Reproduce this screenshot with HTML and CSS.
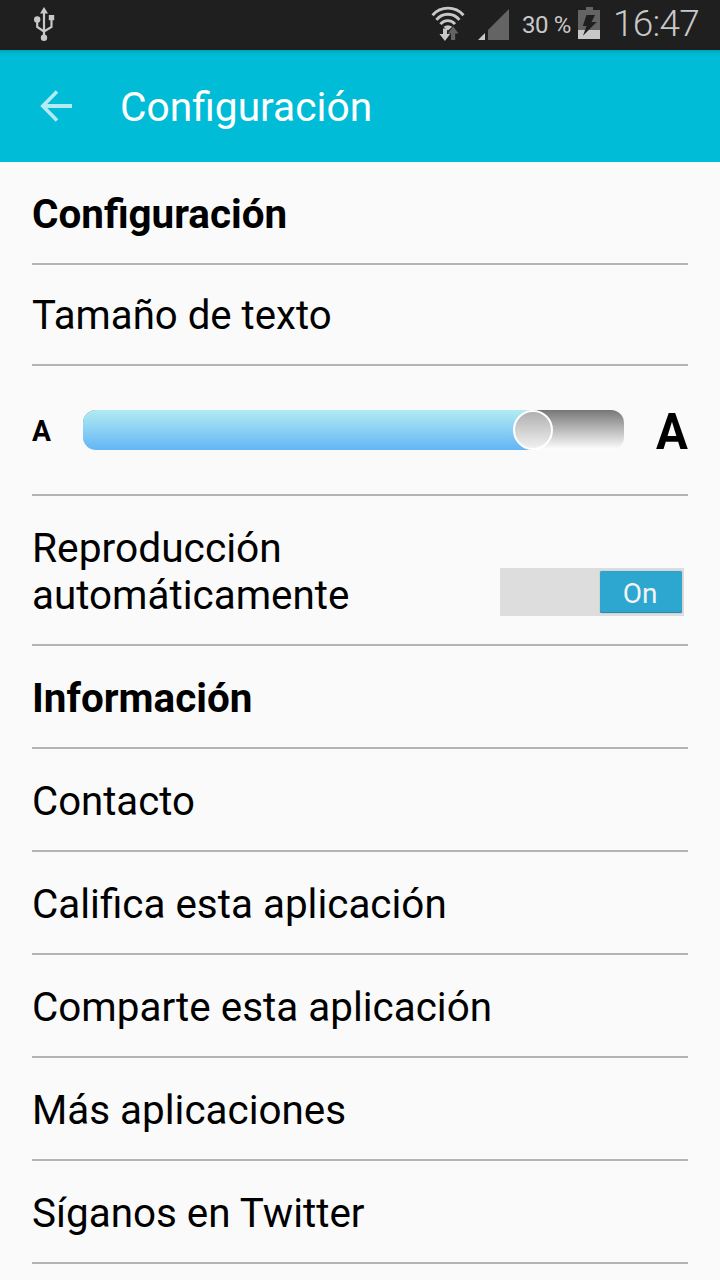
FILE: index.html
```html
<!DOCTYPE html>
<html lang="es">
<head>
<meta charset="utf-8">
<title>Configuración</title>
<link rel="stylesheet" href="styles.css">
</head>
<body>
<div class="status-bar">
  <svg class="usb" width="24" height="36" viewBox="0 0 24 36" fill="#c8c8c8">
    <path d="M12 1l4 6.500h-8z"/>
    <circle cx="5.200" cy="13.500" r="3.200"/>
    <rect x="16.800" y="9" width="5.400" height="5.200"/>
    <circle cx="12" cy="31.700" r="3.200"/>
    <path d="M12 6v25M5.200 15v6l6.800 4.500M19.500 13v8l-7.500 4.500" fill="none" stroke="#c8c8c8" stroke-width="2.200"/>
  </svg>
  <svg class="wifi" width="34" height="36" viewBox="0 0 34 36">
    <g fill="none" stroke="#c8c8c8" stroke-width="2.800">
      <path d="M1.500 9.200A20.700 20.700 0 0 1 32.500 9.200"/>
      <path d="M5.400 13.900A14.500 14.500 0 0 1 28.400 13.900"/>
      <path d="M9.500 18.200A9.300 9.300 0 0 1 24 18.200"/>
    </g>
    <path d="M12.500 20.800Q17 17.500 21.300 20.800L17 24.500z" fill="#c8c8c8"/>
    <path d="M12 22.500h4V28h3.200l-5.300 7-5.400-7H12z" fill="#c8c8c8"/>
    <path d="M22.200 20.500l5.400 7h-3.400V34h-4.200v-6.500h-3.200z" fill="#646464"/>
  </svg>
  <svg class="signal" width="32" height="32" viewBox="0 0 32 32">
    <path d="M31 1v31H10V22z" fill="#646464"/>
    <path d="M7 25v7H0z" fill="#c8c8c8"/>
  </svg>
  <span class="battery-level">30 %</span>
  <svg class="battery" width="22" height="32" viewBox="0 0 22 32">
    <path d="M8 0h7v3h7v20H0V3h8z" fill="#646464"/>
    <path d="M0 23h22v9H0z" fill="#c8c8c8"/>
    <path d="M8.500 8H17l-3.500 7h5.200L5 28.700 8.500 19H4.800z" fill="#1f1f1f"/>
  </svg>
  <span class="clock">16:47</span>
</div>
<header class="app-bar">
  <svg class="back" width="32" height="32" viewBox="0 0 32 32" fill="none" stroke="#b3ebf2">
    <path d="M17 1.500L2.800 16 17 30.500" stroke-width="3.600"/>
    <path d="M3 16H32" stroke-width="4"/>
  </svg>
  <h1 class="title"><span class="fit wide">Configuración</span></h1>
</header>
<main class="settings">
  <h2 class="row heading"><span class="fit">Configuración</span></h2>
  <div class="row text-size"><span class="fit narrow">Tamaño de texto</span></div>
  <div class="row slider-row">
    <span class="small-a">A</span>
    <div class="slider"><div class="slider-fill"></div><div class="thumb"></div></div>
    <span class="large-a">A</span>
  </div>
  <div class="row autoplay">
    <span class="label"><span class="fit wide">Reproducción</span><br><span class="fit">automáticamente</span></span>
    <div class="switch"><span class="switch-on">On</span></div>
  </div>
  <h2 class="row heading"><span class="fit">Información</span></h2>
  <div class="row"><span class="fit narrow">Contacto</span></div>
  <div class="row"><span class="fit">Califica esta aplicación</span></div>
  <div class="row"><span class="fit">Comparte esta aplicación</span></div>
  <div class="row"><span class="fit">Más aplicaciones</span></div>
  <div class="row"><span class="fit">Síganos en Twitter</span></div>
</main>
</body>
</html>
```
FILE: styles.css
```css
* { box-sizing: border-box; }
body { margin: 0; width: 720px; height: 1280px; overflow: hidden; background: #fafafa; color: #000; font-family: Roboto, sans-serif; }
.status-bar { height: 50px; background: #1f1f1f; color: #c8c8c8; display: flex; align-items: flex-start; padding-left: 32px; }
.status-bar svg { flex: none; }
.usb { margin-top: 6px; }
.wifi { margin: 6px 0 0 375px; }
.signal { margin: 8px 0 0 13px; }
.battery-level { width: 56px; margin-left: 12px; font-size: 24px; letter-spacing: -0.4px; line-height: 28px; margin-top: 11px; white-space: nowrap; }
.battery { margin-top: 7px; }
.clock { margin-left: 13px; font-size: 37px; letter-spacing: -0.8px; line-height: 44px; font-weight: 300; margin-top: 2px; white-space: nowrap; }
.app-bar { height: 112px; background: linear-gradient(#00a4b9, #00b6cf 3px, #00bcd7 6px); display: flex; align-items: center; padding-left: 40px; color: #fff; }
.title { margin: 2px 0 0 48px; font-size: 40px; line-height: 47px; font-weight: 400; }
.fit { display: inline-block; transform: scaleX(1.01); transform-origin: left; }
.wide { transform: scaleX(1.018); }
.narrow { transform: scaleX(1.004); }
.settings { padding: 0 32px; }
.row { height: 103px; margin: 0; padding-top: 29px; border-bottom: 2px solid #b4b4b4; font-size: 40px; line-height: 47px; font-weight: 400; white-space: nowrap; }
.heading { font-weight: 700; }
.text-size { height: 101px; padding-top: 27px; }
.slider-row { height: 130px; padding: 0; display: flex; align-items: center; font-weight: 700; }
.small-a { width: 51px; flex: none; font-size: 30px; padding-top: 1px; transform: scaleX(0.94); transform-origin: left; }
.slider { width: 541px; flex: none; height: 40px; border-radius: 13px; background: linear-gradient(#777, #fff); position: relative; overflow: hidden; }
.slider-fill { width: 450px; height: 40px; background: linear-gradient(#b2ebf2, #64b5f6); }
.thumb { position: absolute; left: 430px; top: 0; width: 40px; height: 40px; border: 2px solid #fff; border-radius: 50%; background: linear-gradient(#b0b0b0, #f0f0f0); }
.large-a { margin-left: 32px; font-size: 50px; padding-top: 4px; transform: scaleX(0.95); transform-origin: left; }
.autoplay { height: 150px; padding: 29px 4px 0 0; display: flex; justify-content: space-between; }
.switch { width: 184px; height: 48px; margin-top: 43px; padding: 3px 2px 3px 100px; background: #ddd; }
.switch-on { display: block; height: 42px; border-radius: 2px; background: #2da6d0; box-shadow: inset 0 -1px #248bb0, 0 0 1px #777; color: #f3f3f3; font-size: 28px; line-height: 45px; text-align: center; padding-right: 2px; }
```
